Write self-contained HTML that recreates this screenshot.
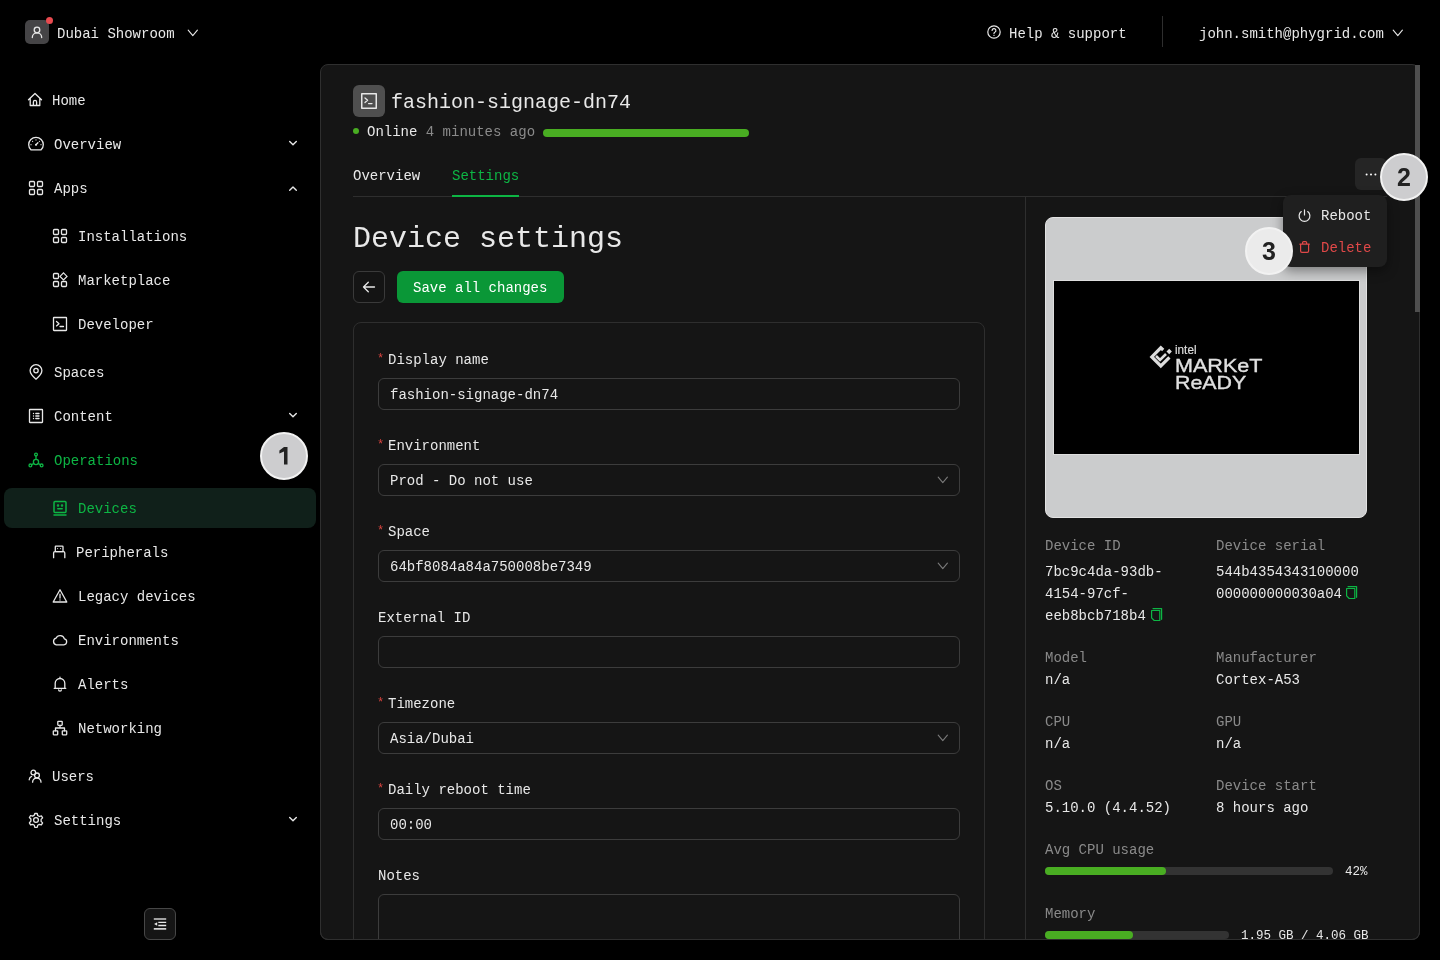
<!DOCTYPE html>
<html><head><meta charset="utf-8">
<style>
*{box-sizing:border-box;margin:0;padding:0}
html,body{width:1440px;height:960px;overflow:hidden;background:#000;color:#e8e8e8;font-family:"Liberation Mono",monospace;font-size:14px}
.a{position:absolute}
.t{position:absolute;white-space:pre;will-change:transform}
svg{position:absolute;overflow:visible}
.s{fill:none;stroke-linecap:round;stroke-linejoin:round}
</style></head><body>

<div class="a" style="left:25px;top:20px;width:24px;height:24px;border-radius:5px;background:#454446"></div>
<svg style="left:25px;top:20px;" width="24" height="24" viewBox="0 0 24 24"><circle cx="12" cy="10" r="2.8" class="s" stroke="#e8e8e8" stroke-width="1.3"/><path d="M7.3 17.6a4.7 4.7 0 0 1 9.4 0" class="s" stroke="#e8e8e8" stroke-width="1.3"/></svg>
<div class="a" style="left:46px;top:17px;width:7px;height:7px;border-radius:50%;background:#e84a4f"></div>
<div class="t" style="left:57px;top:24px;font-size:14px;line-height:20px;height:20px;color:#e8e8e8;">Dubai Showroom</div>
<svg style="left:187px;top:28.5px;" width="12" height="8" viewBox="0 0 12 8"><path d="M1.2 1.2l4.6 5.4l4.6-5.4" class="s" stroke="#e8e8e8" stroke-width="1.1"/></svg>
<svg style="left:986.6px;top:25px;" width="14" height="14" viewBox="0 0 14 14"><circle cx="7" cy="7" r="6.2" class="s" stroke="#e8e8e8" stroke-width="1.2"/><path d="M5.1 5.5a1.9 1.9 0 1 1 2.7 1.7c-.5.2-.8.6-.8 1.1v.3" class="s" stroke="#e8e8e8" stroke-width="1.2"/><circle cx="7" cy="10.4" r=".6" fill="#e8e8e8"/></svg>
<div class="t" style="left:1009px;top:24px;font-size:14px;line-height:20px;height:20px;color:#e8e8e8;">Help &amp; support</div>
<div class="a" style="left:1162px;top:16px;width:1px;height:31px;background:#2e2e2e"></div>
<div class="t" style="left:1199px;top:24px;font-size:14px;line-height:20px;height:20px;color:#e8e8e8;">john.smith@phygrid.com</div>
<svg style="left:1392px;top:28.5px;" width="12" height="8" viewBox="0 0 12 8"><path d="M1.2 1.2l4.6 5.4l4.6-5.4" class="s" stroke="#e8e8e8" stroke-width="1.1"/></svg>
<div class="a" style="left:4px;top:488px;width:312px;height:40px;border-radius:8px;background:#10201a"></div>
<div class="t" style="left:52px;top:91px;font-size:14px;line-height:20px;height:20px;color:#e8e8e8;">Home</div>
<div class="t" style="left:54px;top:135px;font-size:14px;line-height:20px;height:20px;color:#e8e8e8;">Overview</div>
<svg style="left:287px;top:140px;" width="12" height="8" viewBox="0 0 12 8"><path d="M2.7 1.6L6 4.8L9.3 1.6" class="s" stroke="#e8e8e8" stroke-width="1.4"/></svg>
<div class="t" style="left:54px;top:179px;font-size:14px;line-height:20px;height:20px;color:#e8e8e8;">Apps</div>
<svg style="left:287px;top:184px;" width="12" height="8" viewBox="0 0 12 8"><path d="M2.7 6.2L6 3L9.3 6.2" class="s" stroke="#e8e8e8" stroke-width="1.4"/></svg>
<div class="t" style="left:78px;top:227px;font-size:14px;line-height:20px;height:20px;color:#e8e8e8;">Installations</div>
<div class="t" style="left:78px;top:271px;font-size:14px;line-height:20px;height:20px;color:#e8e8e8;">Marketplace</div>
<div class="t" style="left:78px;top:315px;font-size:14px;line-height:20px;height:20px;color:#e8e8e8;">Developer</div>
<div class="t" style="left:54px;top:363px;font-size:14px;line-height:20px;height:20px;color:#e8e8e8;">Spaces</div>
<div class="t" style="left:54px;top:407px;font-size:14px;line-height:20px;height:20px;color:#e8e8e8;">Content</div>
<svg style="left:287px;top:412px;" width="12" height="8" viewBox="0 0 12 8"><path d="M2.7 1.6L6 4.8L9.3 1.6" class="s" stroke="#e8e8e8" stroke-width="1.4"/></svg>
<div class="t" style="left:54px;top:451px;font-size:14px;line-height:20px;height:20px;color:#0db544;">Operations</div>
<div class="t" style="left:78px;top:499px;font-size:14px;line-height:20px;height:20px;color:#0db544;">Devices</div>
<div class="t" style="left:76px;top:543px;font-size:14px;line-height:20px;height:20px;color:#e8e8e8;">Peripherals</div>
<div class="t" style="left:78px;top:587px;font-size:14px;line-height:20px;height:20px;color:#e8e8e8;">Legacy devices</div>
<div class="t" style="left:78px;top:631px;font-size:14px;line-height:20px;height:20px;color:#e8e8e8;">Environments</div>
<div class="t" style="left:78px;top:675px;font-size:14px;line-height:20px;height:20px;color:#e8e8e8;">Alerts</div>
<div class="t" style="left:78px;top:719px;font-size:14px;line-height:20px;height:20px;color:#e8e8e8;">Networking</div>
<div class="t" style="left:52px;top:767px;font-size:14px;line-height:20px;height:20px;color:#e8e8e8;">Users</div>
<div class="t" style="left:54px;top:811px;font-size:14px;line-height:20px;height:20px;color:#e8e8e8;">Settings</div>
<svg style="left:287px;top:816px;" width="12" height="8" viewBox="0 0 12 8"><path d="M2.7 1.6L6 4.8L9.3 1.6" class="s" stroke="#e8e8e8" stroke-width="1.4"/></svg>
<!--ICONS-->
<svg style="left:27px;top:92px;" width="16" height="16" viewBox="0 0 16 16"><path d="M1.5 7.8L8 1.5l6.5 6.3M3.2 6.3v7.2h9.6V6.3M6.4 13.5V10a1.6 1.6 0 0 1 3.2 0v3.5" class="s" stroke="#e8e8e8" stroke-width="1.3"/></svg>
<svg style="left:28px;top:136px;" width="16" height="16" viewBox="0 0 16 16"><path d="M2.9 13.8A7.3 7.3 0 1 1 13.1 13.8Z" class="s" stroke="#e8e8e8" stroke-width="1.3"/><path d="M8 8.7L9.9 6.8" class="s" stroke="#e8e8e8" stroke-width="1.3"/><circle cx="8" cy="8.7" r="1" fill="#e8e8e8"/><circle cx="8" cy="3.9" r=".6" fill="#e8e8e8"/><circle cx="4.6" cy="5.3" r=".6" fill="#e8e8e8"/><circle cx="11.4" cy="5.3" r=".6" fill="#e8e8e8"/><circle cx="3" cy="8.7" r=".6" fill="#e8e8e8"/><circle cx="13" cy="8.7" r=".6" fill="#e8e8e8"/></svg>
<svg style="left:28px;top:180px;" width="16" height="16" viewBox="0 0 16 16"><rect x="1.5" y="1.5" width="5" height="5" rx="1" class="s" stroke="#e8e8e8" stroke-width="1.3"/><rect x="1.5" y="9.5" width="5" height="5" rx="1" class="s" stroke="#e8e8e8" stroke-width="1.3"/><rect x="9.5" y="9.5" width="5" height="5" rx="1" class="s" stroke="#e8e8e8" stroke-width="1.3"/><rect x="9.5" y="1.5" width="5" height="5" rx="1" class="s" stroke="#e8e8e8" stroke-width="1.3"/></svg>
<svg style="left:52px;top:228px;" width="16" height="16" viewBox="0 0 16 16"><rect x="1.5" y="1.5" width="5" height="5" rx="1" class="s" stroke="#e8e8e8" stroke-width="1.3"/><rect x="1.5" y="9.5" width="5" height="5" rx="1" class="s" stroke="#e8e8e8" stroke-width="1.3"/><rect x="9.5" y="9.5" width="5" height="5" rx="1" class="s" stroke="#e8e8e8" stroke-width="1.3"/><rect x="9.5" y="1.5" width="5" height="5" rx="1" class="s" stroke="#e8e8e8" stroke-width="1.3"/></svg>
<svg style="left:52px;top:272px;" width="16" height="16" viewBox="0 0 16 16"><rect x="1.5" y="1.5" width="5" height="5" rx="1" class="s" stroke="#e8e8e8" stroke-width="1.3"/><rect x="1.5" y="9.5" width="5" height="5" rx="1" class="s" stroke="#e8e8e8" stroke-width="1.3"/><rect x="9.5" y="9.5" width="5" height="5" rx="1" class="s" stroke="#e8e8e8" stroke-width="1.3"/><path d="M11.5 0.9L15 4.4L11.5 7.9L8 4.4z" fill="none" stroke="#e8e8e8" stroke-width="1.2" stroke-linejoin="miter"/></svg>
<svg style="left:52px;top:316px;" width="16" height="16" viewBox="0 0 16 16"><rect x="1.5" y="1.5" width="13" height="13" rx="0.5" class="s" stroke="#e8e8e8" stroke-width="1.3"/><path d="M4.5 5.5l2.5 2.2l-2.5 2.2M8 10.5h3.5" class="s" stroke="#e8e8e8" stroke-width="1.3"/></svg>
<svg style="left:28px;top:364px;" width="16" height="16" viewBox="0 0 16 16"><circle cx="8" cy="6.6" r="2.2" class="s" stroke="#e8e8e8" stroke-width="1.3"/><path d="M8 15.2s-5.9-4.9-5.9-8.6a5.9 5.9 0 0 1 11.8 0c0 3.7-5.9 8.6-5.9 8.6z" class="s" stroke="#e8e8e8" stroke-width="1.3"/></svg>
<svg style="left:28px;top:408px;" width="16" height="16" viewBox="0 0 16 16"><rect x="1.5" y="1.5" width="13" height="13" rx="0.5" class="s" stroke="#e8e8e8" stroke-width="1.3"/><path d="M7.8 5.5h3.2M7.8 8h3.2M7.8 10.5h3.2" class="s" stroke="#e8e8e8" stroke-width="1.3"/><circle cx="5.5" cy="5.5" r=".7" fill="#e8e8e8"/><circle cx="5.5" cy="8" r=".7" fill="#e8e8e8"/><circle cx="5.5" cy="10.5" r=".7" fill="#e8e8e8"/></svg>
<svg style="left:28px;top:452px;" width="16" height="16" viewBox="0 0 16 16"><circle cx="8" cy="2.6" r="1.4" class="s" stroke="#0db544" stroke-width="1.3"/><circle cx="2.4" cy="13.4" r="1.4" class="s" stroke="#0db544" stroke-width="1.3"/><circle cx="13.6" cy="13.4" r="1.4" class="s" stroke="#0db544" stroke-width="1.3"/><circle cx="8" cy="10" r="2.6" class="s" stroke="#0db544" stroke-width="1.3"/><path d="M8 4v3.4M5.8 11.4L3.6 12.8M10.2 11.4l2.2 1.4" class="s" stroke="#0db544" stroke-width="1.3"/></svg>
<svg style="left:52px;top:500px;" width="16" height="16" viewBox="0 0 16 16"><rect x="2" y="1.5" width="12" height="11" rx="1" class="s" stroke="#0db544" stroke-width="1.5"/><circle cx="6" cy="5.5" r=".5" class="s" stroke="#0db544" stroke-width="1.5"/><circle cx="10" cy="5.5" r=".5" class="s" stroke="#0db544" stroke-width="1.5"/><path d="M5.8 8.7h4.4M2 15h12" class="s" stroke="#0db544" stroke-width="1.5"/></svg>
<svg style="left:51px;top:544px;" width="16" height="16" viewBox="0 0 16 16"><rect x="4.3" y="2.1" width="7.7" height="5.5" rx="0.6" class="s" stroke="#e8e8e8" stroke-width="1.3"/><path d="M2.6 13.7V9a1.4 1.4 0 0 1 1.4-1.4h8.4a1.4 1.4 0 0 1 1.4 1.4v4.7" class="s" stroke="#e8e8e8" stroke-width="1.3"/><circle cx="6.6" cy="4.6" r=".55" fill="#e8e8e8"/><circle cx="9.6" cy="4.6" r=".55" fill="#e8e8e8"/></svg>
<svg style="left:52px;top:588px;" width="16" height="16" viewBox="0 0 16 16"><path d="M8 1.8L14.8 14H1.2z" class="s" stroke="#e8e8e8" stroke-width="1.3"/><path d="M8 6.2v3.8M8 12v.1" class="s" stroke="#e8e8e8" stroke-width="1.3"/></svg>
<svg style="left:52px;top:632px;" width="16" height="16" viewBox="0 0 16 16"><path d="M4.3 12.8h7.6a3 3 0 0 0 .5-5.9A4.5 4.5 0 0 0 4 6.2a3.4 3.4 0 0 0 .3 6.6z" class="s" stroke="#e8e8e8" stroke-width="1.3"/></svg>
<svg style="left:52px;top:676px;" width="16" height="16" viewBox="0 0 16 16"><path d="M3.2 12.3V7.3a4.8 4.8 0 0 1 9.6 0v5M2.2 12.3h11.6M6.6 13.8a1.4 1.4 0 0 0 2.8 0M8 1.2v1.2" class="s" stroke="#e8e8e8" stroke-width="1.3"/></svg>
<svg style="left:52px;top:720px;" width="16" height="16" viewBox="0 0 16 16"><rect x="5.8" y="1.3" width="4.4" height="4" rx=".5" class="s" stroke="#e8e8e8" stroke-width="1.3"/><rect x="1.3" y="10.8" width="4.4" height="4" rx=".5" class="s" stroke="#e8e8e8" stroke-width="1.3"/><rect x="10.3" y="10.8" width="4.4" height="4" rx=".5" class="s" stroke="#e8e8e8" stroke-width="1.3"/><path d="M8 5.3v2.7M3.5 10.8V8h9v2.8" class="s" stroke="#e8e8e8" stroke-width="1.3"/></svg>
<svg style="left:27px;top:768px;" width="16" height="16" viewBox="0 0 16 16"><circle cx="6.3" cy="4.5" r="2.3" class="s" stroke="#e8e8e8" stroke-width="1.3"/><circle cx="10" cy="7.4" r="2.4" class="s" stroke="#e8e8e8" stroke-width="1.3"/><path d="M2.2 11.8a4 4 0 0 1 2.4-3.4M5.6 14.2a4.2 4.2 0 0 1 8.4 0" class="s" stroke="#e8e8e8" stroke-width="1.3"/></svg>
<svg style="left:28px;top:812px;" width="16" height="16" viewBox="0 0 16 16"><path d="M6.8 1.5h2.4l.5 2 1.7 1 2-.6 1.2 2-1.5 1.5v2l1.5 1.5-1.2 2-2-.6-1.7 1-.5 2H6.8l-.5-2-1.7-1-2 .6-1.2-2L2.9 9V7L1.4 5.5l1.2-2 2 .6 1.7-1z" class="s" stroke="#e8e8e8" stroke-width="1.3"/><circle cx="8" cy="8" r="2.4" class="s" stroke="#e8e8e8" stroke-width="1.3"/></svg>
<div class="a" style="left:144px;top:908px;width:32px;height:32px;border-radius:6px;background:#151515;border:1px solid #474747"></div>
<svg style="left:152px;top:916px;" width="16" height="16" viewBox="0 0 16 16"><path d="M1.8 3h12.4M1.8 12.9h12.4" fill="none" stroke="#d0d0d0" stroke-width="1.6"/><path d="M6.3 6.4h7.9M6.3 9.5h7.9" fill="none" stroke="#e8e8e8" stroke-width="1.3"/><path d="M5.2 6.2L2.1 8L5.2 9.8z" fill="#e8e8e8"/></svg>
<div class="a" style="left:320px;top:64px;width:1100px;height:876px;border-radius:8px;background:#151515;border:1px solid #2f2f2f"></div>
<div class="a" style="left:1415px;top:65px;width:5px;height:247px;background:#4f4f4f"></div>
<div class="a" style="left:353px;top:85px;width:32px;height:32px;border-radius:6px;background:#4f4f4f"></div>
<svg style="left:361px;top:93px;" width="16" height="16" viewBox="0 0 16 16"><rect x="0.75" y="0.75" width="14.5" height="14.5" class="s" stroke="#e8e8e8" stroke-width="1.5"/><path d="M4 5l2.6 2.3L4 9.6M7.6 10.6h3.4" class="s" stroke="#e8e8e8" stroke-width="1.3"/></svg>
<div class="t" style="left:391px;top:89px;font-size:20px;line-height:28px;height:28px;color:#e8e8e8;">fashion-signage-dn74</div>
<div class="a" style="left:353px;top:128px;width:6px;height:6px;border-radius:50%;background:#49ad22"></div>
<div class="t" style="left:367px;top:122px;line-height:20px;color:#e8e8e8">Online <span style="color:#8a8a8a">4 minutes ago</span></div>
<div class="a" style="left:543px;top:129px;width:206px;height:8px;border-radius:4px;background:#49ad22"></div>
<div class="t" style="left:353px;top:166px;font-size:14px;line-height:20px;height:20px;color:#e8e8e8;">Overview</div>
<div class="t" style="left:452px;top:166px;font-size:14px;line-height:20px;height:20px;color:#0db544;">Settings</div>
<div class="a" style="left:353px;top:196px;width:1034px;height:1px;background:#2e2e2e"></div>
<div class="a" style="left:452px;top:195px;width:67px;height:2px;background:#0db544"></div>
<div class="a" style="left:1355px;top:158px;width:32px;height:32px;border-radius:6px;background:#252525"></div>
<svg style="left:1363px;top:166px;" width="16" height="16" viewBox="0 0 16 16"><circle cx="3.6" cy="8.4" r="1" fill="#fff"/><circle cx="8" cy="8.4" r="1" fill="#fff"/><circle cx="12.4" cy="8.4" r="1" fill="#fff"/></svg>
<div class="a" style="left:1025px;top:197px;width:1px;height:743px;background:#2e2e2e"></div>
<div class="t" style="left:353px;top:219px;font-size:30px;line-height:40px;height:40px;color:#e8e8e8;">Device settings</div>
<div class="a" style="left:353px;top:271px;width:32px;height:32px;border-radius:6px;border:1px solid #3a3a3a;background:#141414"></div>
<svg style="left:361px;top:279px;" width="16" height="16" viewBox="0 0 16 16"><path d="M13.5 8h-11M7.3 3.2L2.5 8l4.8 4.8" class="s" stroke="#e8e8e8" stroke-width="1.3"/></svg>
<div class="a" style="left:397px;top:270.6px;width:167px;height:32px;border-radius:6px;background:#0a9737"></div>
<div class="t" style="left:413px;top:278px;font-size:14px;line-height:20px;height:20px;color:#fff;">Save all changes</div>
<div class="a" style="left:353px;top:322px;width:632px;height:660px;border-radius:8px;border:1px solid #2e2e2e"></div>
<div class="t" style="left:377px;top:351px;font-size:12px;line-height:16px;height:16px;color:#d9443f;">*</div>
<div class="t" style="left:388px;top:350px;font-size:14px;line-height:20px;height:20px;color:#e8e8e8;">Display name</div>
<div class="a" style="left:378px;top:378px;width:582px;height:32px;border-radius:6px;border:1px solid #3c3c3c"></div>
<div class="t" style="left:390px;top:385px;font-size:14px;line-height:20px;height:20px;color:#e8e8e8;">fashion-signage-dn74</div>
<div class="t" style="left:377px;top:437px;font-size:12px;line-height:16px;height:16px;color:#d9443f;">*</div>
<div class="t" style="left:388px;top:436px;font-size:14px;line-height:20px;height:20px;color:#e8e8e8;">Environment</div>
<div class="a" style="left:378px;top:464px;width:582px;height:32px;border-radius:6px;border:1px solid #3c3c3c"></div>
<div class="t" style="left:390px;top:471px;font-size:14px;line-height:20px;height:20px;color:#e8e8e8;">Prod - Do not use</div>
<svg style="left:936.5px;top:475.5px;" width="12" height="8" viewBox="0 0 12 8"><path d="M1.2 1.2l4.6 5.4l4.6-5.4" class="s" stroke="#7a7a7a" stroke-width="1.1"/></svg>
<div class="t" style="left:377px;top:523px;font-size:12px;line-height:16px;height:16px;color:#d9443f;">*</div>
<div class="t" style="left:388px;top:522px;font-size:14px;line-height:20px;height:20px;color:#e8e8e8;">Space</div>
<div class="a" style="left:378px;top:550px;width:582px;height:32px;border-radius:6px;border:1px solid #3c3c3c"></div>
<div class="t" style="left:390px;top:557px;font-size:14px;line-height:20px;height:20px;color:#e8e8e8;">64bf8084a84a750008be7349</div>
<svg style="left:936.5px;top:561.5px;" width="12" height="8" viewBox="0 0 12 8"><path d="M1.2 1.2l4.6 5.4l4.6-5.4" class="s" stroke="#7a7a7a" stroke-width="1.1"/></svg>
<div class="t" style="left:378px;top:608px;font-size:14px;line-height:20px;height:20px;color:#e8e8e8;">External ID</div>
<div class="a" style="left:378px;top:636px;width:582px;height:32px;border-radius:6px;border:1px solid #3c3c3c"></div>
<div class="t" style="left:377px;top:695px;font-size:12px;line-height:16px;height:16px;color:#d9443f;">*</div>
<div class="t" style="left:388px;top:694px;font-size:14px;line-height:20px;height:20px;color:#e8e8e8;">Timezone</div>
<div class="a" style="left:378px;top:722px;width:582px;height:32px;border-radius:6px;border:1px solid #3c3c3c"></div>
<div class="t" style="left:390px;top:729px;font-size:14px;line-height:20px;height:20px;color:#e8e8e8;">Asia/Dubai</div>
<svg style="left:936.5px;top:733.5px;" width="12" height="8" viewBox="0 0 12 8"><path d="M1.2 1.2l4.6 5.4l4.6-5.4" class="s" stroke="#7a7a7a" stroke-width="1.1"/></svg>
<div class="t" style="left:377px;top:781px;font-size:12px;line-height:16px;height:16px;color:#d9443f;">*</div>
<div class="t" style="left:388px;top:780px;font-size:14px;line-height:20px;height:20px;color:#e8e8e8;">Daily reboot time</div>
<div class="a" style="left:378px;top:808px;width:582px;height:32px;border-radius:6px;border:1px solid #3c3c3c"></div>
<div class="t" style="left:390px;top:815px;font-size:14px;line-height:20px;height:20px;color:#e8e8e8;">00:00</div>
<div class="t" style="left:378px;top:866px;font-size:14px;line-height:20px;height:20px;color:#e8e8e8;">Notes</div>
<div class="a" style="left:378px;top:894px;width:582px;height:80px;border-radius:6px;border:1px solid #3c3c3c"></div>
<div class="a" style="left:1045px;top:217px;width:322px;height:301px;border-radius:8px;background:#cbcccd;border:1px solid #e2e2e2"></div>
<div class="a" style="left:1053px;top:280px;width:307px;height:175px;background:#000;border:1px solid #dedede"></div>
<svg style="left:0px;top:0px;" width="1440" height="960" viewBox="0 0 1440 960"><path d="M1163.2 350L1160.8 347.8L1151.8 357L1160.8 366L1169.4 357.4" fill="none" stroke="#dcdcdc" stroke-width="3.2" stroke-linejoin="miter"/><path d="M1156 356L1160 360L1166 354" fill="none" stroke="#dcdcdc" stroke-width="2.6"/><rect x="1167.3" y="349.6" width="3.8" height="3.8" fill="#dcdcdc" transform="rotate(45 1169.2 351.5)"/><text x="1175" y="354" font-family="Liberation Sans" font-size="12" fill="#dcdcdc" stroke="#dcdcdc" stroke-width="0.2" textLength="21.5" lengthAdjust="spacingAndGlyphs">intel</text><text x="1175" y="371.7" font-family="Liberation Sans" font-size="19" fill="#e0e0e0" stroke="#e0e0e0" stroke-width="0.35" textLength="87.5" lengthAdjust="spacingAndGlyphs">MARKeT</text><text x="1175" y="388.8" font-family="Liberation Sans" font-size="19" fill="#e0e0e0" stroke="#e0e0e0" stroke-width="0.35" textLength="71.3" lengthAdjust="spacingAndGlyphs">ReADY</text></svg>
<div class="t" style="left:1045px;top:536px;font-size:14px;line-height:20px;height:20px;color:#8a8a8a;">Device ID</div>
<div class="t" style="left:1045px;top:562px;font-size:14px;line-height:20px;height:20px;color:#e8e8e8;">7bc9c4da-93db-</div>
<div class="t" style="left:1045px;top:584px;font-size:14px;line-height:20px;height:20px;color:#e8e8e8;">4154-97cf-</div>
<div class="t" style="left:1045px;top:606px;font-size:14px;line-height:20px;height:20px;color:#e8e8e8;">eeb8bcb718b4</div>
<div class="t" style="left:1216px;top:536px;font-size:14px;line-height:20px;height:20px;color:#8a8a8a;">Device serial</div>
<div class="t" style="left:1216px;top:562px;font-size:14px;line-height:20px;height:20px;color:#e8e8e8;">544b4354343100000</div>
<div class="t" style="left:1216px;top:584px;font-size:14px;line-height:20px;height:20px;color:#e8e8e8;">000000000030a04</div>
<div class="t" style="left:1045px;top:648px;font-size:14px;line-height:20px;height:20px;color:#8a8a8a;">Model</div>
<div class="t" style="left:1045px;top:670px;font-size:14px;line-height:20px;height:20px;color:#e8e8e8;">n/a</div>
<div class="t" style="left:1216px;top:648px;font-size:14px;line-height:20px;height:20px;color:#8a8a8a;">Manufacturer</div>
<div class="t" style="left:1216px;top:670px;font-size:14px;line-height:20px;height:20px;color:#e8e8e8;">Cortex-A53</div>
<div class="t" style="left:1045px;top:712px;font-size:14px;line-height:20px;height:20px;color:#8a8a8a;">CPU</div>
<div class="t" style="left:1045px;top:734px;font-size:14px;line-height:20px;height:20px;color:#e8e8e8;">n/a</div>
<div class="t" style="left:1216px;top:712px;font-size:14px;line-height:20px;height:20px;color:#8a8a8a;">GPU</div>
<div class="t" style="left:1216px;top:734px;font-size:14px;line-height:20px;height:20px;color:#e8e8e8;">n/a</div>
<div class="t" style="left:1045px;top:776px;font-size:14px;line-height:20px;height:20px;color:#8a8a8a;">OS</div>
<div class="t" style="left:1045px;top:798px;font-size:14px;line-height:20px;height:20px;color:#e8e8e8;">5.10.0 (4.4.52)</div>
<div class="t" style="left:1216px;top:776px;font-size:14px;line-height:20px;height:20px;color:#8a8a8a;">Device start</div>
<div class="t" style="left:1216px;top:798px;font-size:14px;line-height:20px;height:20px;color:#e8e8e8;">8 hours ago</div>
<svg style="left:1151px;top:608px;" width="12" height="13" viewBox="0 0 12 13"><path d="M2 0.6H10.6V11.3" class="s" stroke="#0db544" stroke-width="1.2"/><path d="M0.6 2.5H8.8V12.5H3.2L0.6 9.9Z" class="s" stroke="#0db544" stroke-width="1.2"/></svg>
<svg style="left:1346px;top:586px;" width="12" height="13" viewBox="0 0 12 13"><path d="M2 0.6H10.6V11.3" class="s" stroke="#0db544" stroke-width="1.2"/><path d="M0.6 2.5H8.8V12.5H3.2L0.6 9.9Z" class="s" stroke="#0db544" stroke-width="1.2"/></svg>
<div class="t" style="left:1045px;top:840px;font-size:14px;line-height:20px;height:20px;color:#8a8a8a;">Avg CPU usage</div>
<div class="a" style="left:1045px;top:867px;width:288px;height:8px;border-radius:4px;background:#333"></div>
<div class="a" style="left:1045px;top:867px;width:121px;height:8px;border-radius:4px;background:#49ad22"></div>
<div class="t" style="left:1345px;top:864px;font-size:12px;line-height:16px;height:16px;color:#e8e8e8;font-size:12.5px">42%</div>
<div class="t" style="left:1045px;top:904px;font-size:14px;line-height:20px;height:20px;color:#8a8a8a;">Memory</div>
<div class="a" style="left:1045px;top:931px;width:184px;height:8px;border-radius:4px;background:#333"></div>
<div class="a" style="left:1045px;top:931px;width:88px;height:8px;border-radius:4px;background:#49ad22"></div>
<div class="t" style="left:1241px;top:928px;font-size:12px;line-height:16px;height:16px;color:#e8e8e8;font-size:12.5px">1.95 GB / 4.06 GB</div>
<div class="a" style="left:320px;top:940px;width:1120px;height:20px;background:#000"></div>
<div class="a" style="left:320px;top:932px;width:1100px;height:8px;border-bottom:1px solid #2f2f2f;border-left:1px solid #2f2f2f;border-right:1px solid #2f2f2f;border-radius:0 0 8px 8px;background:transparent"></div>
<div class="a" style="left:1283px;top:195px;width:104px;height:72px;border-radius:8px;background:#1f1f1f;box-shadow:0 4px 12px rgba(0,0,0,.4)"></div>
<svg style="left:1297px;top:207px;" width="16" height="16" viewBox="0 0 16 16"><path d="M7.5 2.9v5" class="s" stroke="#e8e8e8" stroke-width="1.2"/><path d="M4.3 4.6a5.4 5.4 0 1 0 6.4 0" class="s" stroke="#e8e8e8" stroke-width="1.2"/></svg>
<div class="t" style="left:1321px;top:206px;font-size:14px;line-height:20px;height:20px;color:#e8e8e8;">Reboot</div>
<svg style="left:1297px;top:239px;" width="16" height="16" viewBox="0 0 16 16"><path d="M3.6 5.2v6.8a1.3 1.3 0 0 0 1.3 1.3h5.4a1.3 1.3 0 0 0 1.3-1.3V5.2M2.9 5.2h9.4M5.6 5.2V3.6a.9.9 0 0 1 .9-.9h2.2a.9.9 0 0 1 .9.9v1.6" class="s" stroke="#e04848" stroke-width="1.2"/></svg>
<div class="t" style="left:1321px;top:238px;font-size:14px;line-height:20px;height:20px;color:#e04848;">Delete</div>
<div class="a" style="left:260px;top:432px;width:48px;height:48px;border-radius:50%;background:#cdcdcf;border:2px solid #f2f2f2"></div>
<svg style="left:279px;top:447px;" width="9" height="18" viewBox="0 0 9 18"><path d="M5 0h3.5v17.6H5V4.6L0.4 6.6V3.4z" fill="#222"/></svg>
<div class="a" style="left:1380px;top:153px;width:48px;height:48px;border-radius:50%;background:#cdcdcf;border:2px solid #f2f2f2"></div>
<div class="t" style="left:1380px;top:162px;width:48px;text-align:center;font-family:'Liberation Sans',sans-serif;font-weight:bold;font-size:25px;line-height:30px;color:#222">2</div>
<div class="a" style="left:1245px;top:227px;width:48px;height:48px;border-radius:50%;background:#ebebeb;border:2px solid #f2f2f2"></div>
<div class="t" style="left:1245px;top:236px;width:48px;text-align:center;font-family:'Liberation Sans',sans-serif;font-weight:bold;font-size:25px;line-height:30px;color:#222">3</div>
</body></html>
